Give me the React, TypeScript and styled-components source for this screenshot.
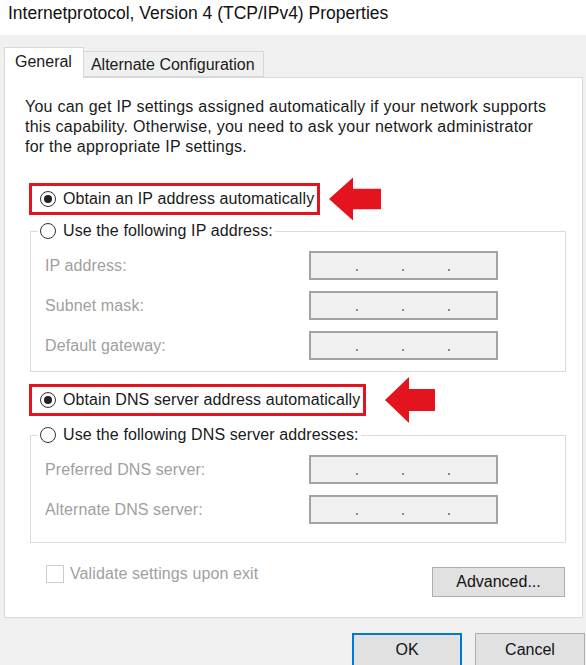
import styled, { createGlobalStyle } from 'styled-components';

const GlobalStyle = createGlobalStyle`
  html, body {
    margin: 0;
    padding: 0;
    background: #f0f0f0;
  }
  * {
    box-sizing: border-box;
  }
`;

const colors = {
  window: '#f0f0f0',
  panel: '#ffffff',
  border: '#d9d9d9',
  groupBorder: '#dcdcdc',
  text: '#1a1a1a',
  disabled: '#a0a0a0',
  red: '#e3141d',
  blue: '#0078d7',
  button: '#e1e1e1',
  buttonBorder: '#adadad',
};

const Window = styled.div`
  width: 586px;
  height: 665px;
  overflow: hidden;
  background: ${colors.window};
  font-family: 'Liberation Sans', Arial, sans-serif;
  font-size: 16px;
  letter-spacing: 0.1px;
  color: ${colors.text};
`;

const TitleBar = styled.div`
  height: 35px;
  background: #ffffff;
  padding: 2px 0 0 8px;
  font-size: 17.5px;
  line-height: 22px;
  letter-spacing: 0;
  color: #111;
`;

const Content = styled.div`
  padding: 12px 3px 0 4px;
`;

const TabRow = styled.div`
  display: flex;
  align-items: flex-end;
  height: 30px;
`;

const Tab = styled.div<{ $active?: boolean }>`
  position: relative;
  z-index: ${({ $active }) => ($active ? 2 : 1)};
  height: ${({ $active }) => ($active ? '31px' : '26px')};
  margin-bottom: ${({ $active }) => ($active ? '-1px' : '0')};
  padding: ${({ $active }) => ($active ? '4px 11px 0 10px' : '3px 8px 0 7px')};
  background: ${({ $active }) => ($active ? colors.panel : colors.window)};
  border: 1px solid ${colors.border};
  border-bottom: ${({ $active }) => ($active ? 'none' : `1px solid ${colors.border}`)};
  border-left: ${({ $active }) => ($active ? `1px solid ${colors.border}` : 'none')};
  line-height: 20px;
  letter-spacing: 0;
`;

const Panel = styled.div`
  position: relative;
  height: 541px;
  background: ${colors.panel};
  border: 1px solid ${colors.border};
  padding: 19px 16px 0 20px;
`;

const Description = styled.p`
  margin: 0;
  line-height: 20px;
  letter-spacing: 0.25px;
`;

const OptionRow = styled.div<{ $highlight?: boolean; $top: number }>`
  position: relative;
  display: flex;
  width: fit-content;
  align-items: center;
  margin: ${({ $top }) => `${$top}px 0 0 4px`};
  height: 32px;
  padding: 0 3px 0 8px;
  border: 3px solid ${({ $highlight }) => ($highlight ? colors.red : 'transparent')};
  gap: 7px;
  line-height: 20px;
`;

const Radio = styled.span<{ $checked?: boolean }>`
  position: relative;
  flex: none;
  width: 16px;
  height: 16px;
  border-radius: 50%;
  border: 1px solid #333;
  background: #fff;

  &::after {
    content: '';
    display: ${({ $checked }) => ($checked ? 'block' : 'none')};
    position: absolute;
    left: 3px;
    top: 3px;
    width: 8px;
    height: 8px;
    border-radius: 50%;
    background: #222;
  }
`;

const Arrow = styled.svg<{ $gap: number }>`
  position: absolute;
  left: ${({ $gap }) => `calc(100% + ${$gap}px)`};
  top: 50%;
  transform: translateY(-50%);
`;

const GroupBox = styled.div<{ $top: number; $bottom: number }>`
  margin: ${({ $top }) => `${$top}px 0 0 5px`};
  width: 536px;
  border: 1px solid ${colors.groupBorder};
  padding: 0 0 ${({ $bottom }) => `${$bottom}px`} 14px;
`;

const Legend = styled.div`
  display: flex;
  width: fit-content;
  align-items: center;
  gap: 7px;
  height: 22px;
  margin: -12px 0 0 -7px;
  padding: 0 2px;
  background: ${colors.panel};
  line-height: 20px;
`;

const FieldList = styled.div<{ $top: number }>`
  display: flex;
  flex-direction: column;
  gap: 11px;
  margin-top: ${({ $top }) => `${$top}px`};
`;

const FieldRow = styled.div`
  display: flex;
  align-items: center;
  justify-content: space-between;
  width: 453px;
  height: 29px;
  color: ${colors.disabled};
`;

const IpBox = styled.div`
  display: grid;
  grid-template-columns: repeat(3, 1fr);
  width: 189px;
  height: 29px;
  padding: 0 47px 0 0;
  background: ${colors.window};
  border: 2px solid #a3a3a3;
`;

const IpDot = styled.span`
  justify-self: end;
  width: 2px;
  height: 2px;
  margin: 16px -1px 0 0;
  background: #8a8a9a;
`;

const BottomRow = styled.div`
  display: flex;
  justify-content: space-between;
  align-items: flex-start;
  margin: 21px 0 0 0;
  width: 540px;
`;

const CheckLabel = styled.label`
  display: flex;
  align-items: center;
  gap: 6px;
  margin-left: 21px;
  color: ${colors.disabled};
  line-height: 20px;
`;

const CheckBox = styled.span`
  width: 18px;
  height: 18px;
  border: 1px solid #cccccc;
  background: #fff;
`;

const Button = styled.button<{ $primary?: boolean; $width: number; $top?: number }>`
  width: ${({ $width }) => `${$width}px`};
  height: 30px;
  margin: ${({ $top = 0 }) => `${$top}px 0 0 0`};
  padding: 0;
  background: ${colors.button};
  border: ${({ $primary }) => ($primary ? `2px solid ${colors.blue}` : `1px solid ${colors.buttonBorder}`)};
  font-family: 'Liberation Sans', Arial, sans-serif;
  font-size: 16px;
  color: #111;
`;

const Footer = styled.div`
  display: flex;
  justify-content: flex-end;
  gap: 13px;
  margin: 15px -2px 0 0;

  & > button {
    height: 34px;
  }
`;

const RedArrow = ({ gap, width, height }: { gap: number; width: number; height: number }) => {
  const head = Math.round(width * 0.47);
  const mid = height / 2;
  const shaft = height * 0.26;
  return (
    <Arrow $gap={gap} width={width} height={height} viewBox={`0 0 ${width} ${height}`}>
      <polygon
        fill={colors.red}
        points={`0,${mid} ${head},0 ${head},${shaft} ${width},${shaft} ${width},${height - shaft} ${head},${height - shaft} ${head},${height}`}
      />
    </Arrow>
  );
};

const IpField = ({ label }: { label: string }) => (
  <FieldRow>
    <span>{label}</span>
    <IpBox>
      <IpDot />
      <IpDot />
      <IpDot />
    </IpBox>
  </FieldRow>
);

const App = () => (
  <>
    <GlobalStyle />
    <Window>
      <TitleBar>Internetprotocol, Version 4 (TCP/IPv4) Properties</TitleBar>
      <Content>
        <TabRow>
          <Tab $active>General</Tab>
          <Tab>Alternate Configuration</Tab>
        </TabRow>
        <Panel>
          <Description>
            You can get IP settings assigned automatically if your network supports
            <br />
            this capability. Otherwise, you need to ask your network administrator
            <br />
            for the appropriate IP settings.
          </Description>

          <OptionRow $highlight $top={26}>
            <Radio $checked />
            Obtain an IP address automatically
            <RedArrow gap={12} width={52} height={43} />
          </OptionRow>

          <GroupBox $top={16} $bottom={11}>
            <Legend>
              <Radio />
              Use the following IP address:
            </Legend>
            <FieldList $top={9}>
              <IpField label="IP address:" />
              <IpField label="Subnet mask:" />
              <IpField label="Default gateway:" />
            </FieldList>
          </GroupBox>

          <OptionRow $highlight $top={12}>
            <Radio $checked />
            Obtain DNS server address automatically
            <RedArrow gap={22} width={50} height={46} />
          </OptionRow>

          <GroupBox $top={19} $bottom={18}>
            <Legend>
              <Radio />
              Use the following DNS server addresses:
            </Legend>
            <FieldList $top={9}>
              <IpField label="Preferred DNS server:" />
              <IpField label="Alternate DNS server:" />
            </FieldList>
          </GroupBox>

          <BottomRow>
            <CheckLabel>
              <CheckBox />
              Validate settings upon exit
            </CheckLabel>
            <Button $width={133} $top={3}>
              Advanced...
            </Button>
          </BottomRow>
        </Panel>
        <Footer>
          <Button $primary $width={110}>
            OK
          </Button>
          <Button $width={110}>Cancel</Button>
        </Footer>
      </Content>
    </Window>
  </>
);

export default App;
